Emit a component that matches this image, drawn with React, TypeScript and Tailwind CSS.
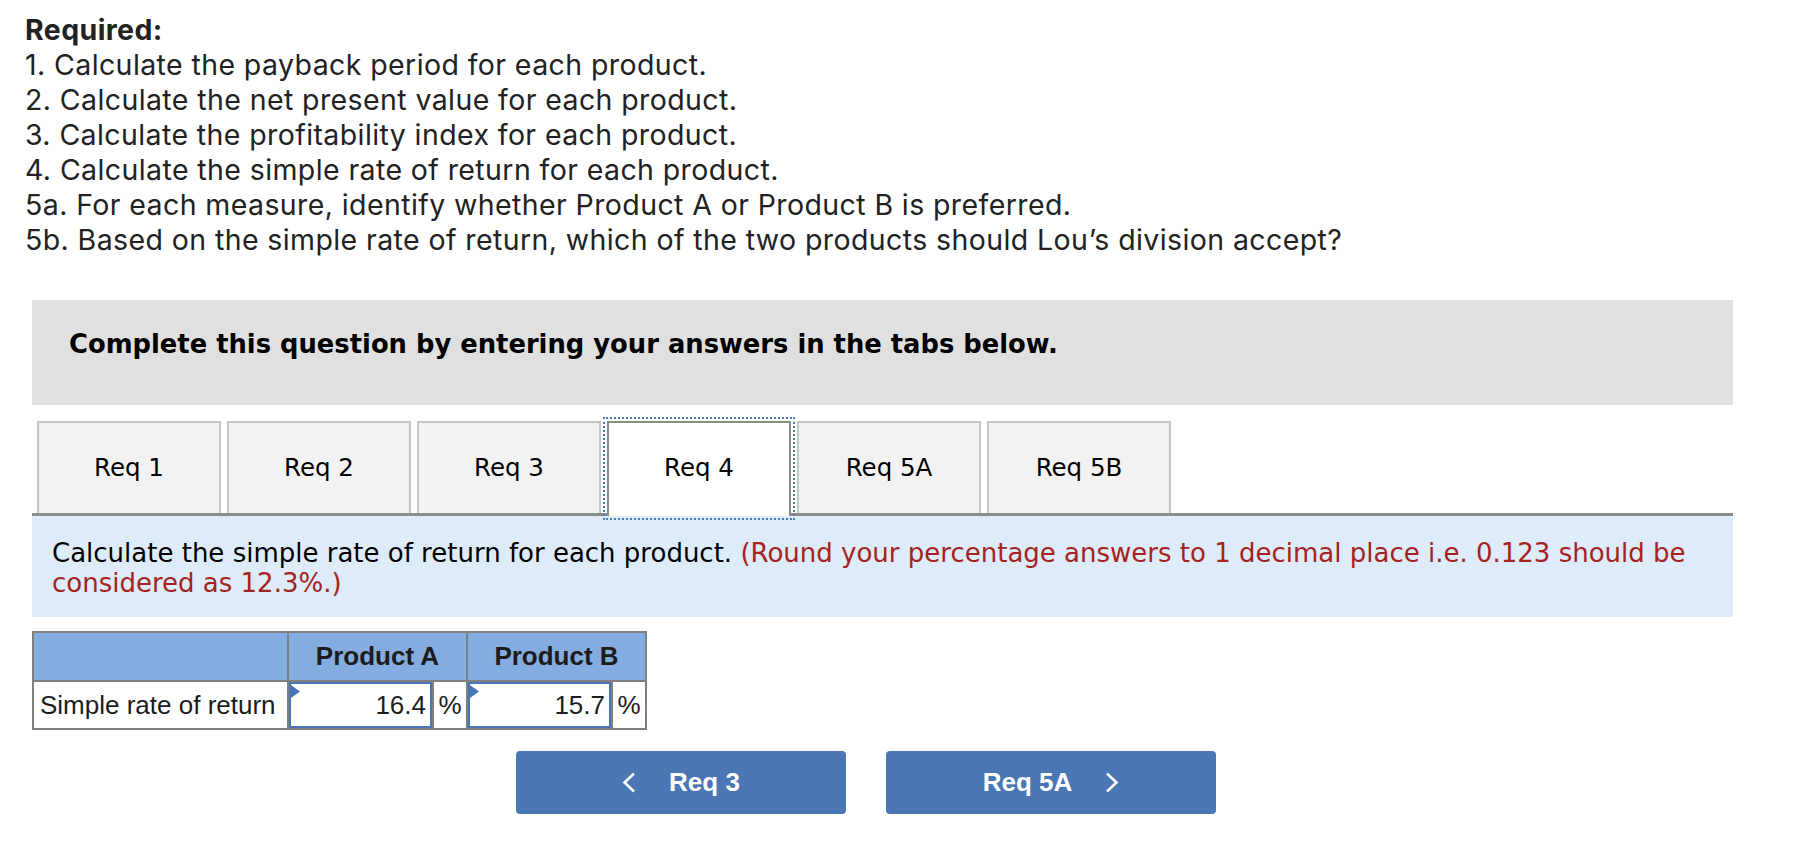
import React from 'react';

const verdana = "font-['DejaVu_Sans',Verdana,sans-serif]";
const arial = "font-['Liberation_Sans',Arial,Helvetica,sans-serif]";

const tabs = ['Req 1', 'Req 2', 'Req 3', 'Req 4', 'Req 5A', 'Req 5B'];
const activeTab = 'Req 4';

function Marker() {
  return (
    <svg className="absolute left-0 top-[1px]" width="10" height="13" viewBox="0 0 10 13">
      <polygon points="0,0 9,6.5 0,13" fill="#4a75b5" />
    </svg>
  );
}

function ChevronLeft() {
  return (
    <svg width="14" height="21" viewBox="0 0 14 21" fill="none">
      <polyline points="12,1.5 2.5,10.5 12,19.5" stroke="white" strokeWidth="2.6" />
    </svg>
  );
}

function ChevronRight() {
  return (
    <svg width="14" height="21" viewBox="0 0 14 21" fill="none">
      <polyline points="2,1.5 11.5,10.5 2,19.5" stroke="white" strokeWidth="2.6" />
    </svg>
  );
}

export default function App() {
  const required = [
    '1. Calculate the payback period for each product.',
    '2. Calculate the net present value for each product.',
    '3. Calculate the profitability index for each product.',
    '4. Calculate the simple rate of return for each product.',
    '5a. For each measure, identify whether Product A or Product B is preferred.',
    '5b. Based on the simple rate of return, which of the two products should Lou\u2019s division accept?',
  ];

  return (
    <div className="min-h-[868px] w-[1808px] bg-white pb-10">
      <div className="pl-[25px] pt-[12px] font-['Inter',sans-serif] text-[28.5px] leading-[35px] tracking-[0.4px] text-[#222]">
        <div className="font-bold">Required:</div>
        {required.map((line) => (
          <div key={line}>{line}</div>
        ))}
      </div>

      <div className="ml-[32px] mt-[43px] w-[1701px]">
        <div className={`h-[105px] bg-[#e0e0e0] pl-[37px] pt-[29px] ${verdana} text-[25.8px] font-bold leading-[30px] text-black`}>
          Complete this question by entering your answers in the tabs below.
        </div>

        <div className="mt-[16px] flex items-end gap-[6px] border-b-[3px] border-[#8c8c8c] pl-[5px]">
          {tabs.map((t) =>
            t === activeTab ? (
              <div
                key={t}
                className={`relative -mb-[3px] flex h-[95px] w-[184px] items-center justify-center border-2 border-b-0 border-[#8c8c8c] bg-white pb-[3px] outline-2 outline-offset-2 outline-dotted outline-[#4a7bc4] ${verdana} text-[24.5px] text-black`}
              >
                {t}
              </div>
            ) : (
              <div
                key={t}
                className={`flex h-[92px] w-[184px] items-center justify-center border-2 border-b-0 border-[#c6c6c6] bg-[#f2f2f2] ${verdana} text-[24.5px] text-black`}
              >
                {t}
              </div>
            )
          )}
        </div>

        <div className={`h-[101px] bg-[#deebf8] pl-[20px] pt-[22px] ${verdana} text-[26px] leading-[30px] text-black`}>
          Calculate the simple rate of return for each product.{' '}
          <span className="text-[#a4231e]">
            (Round your percentage answers to 1 decimal place i.e. 0.123 should be
            <br />
            considered as 12.3%.)
          </span>
        </div>

        <div
          className={`mt-[14px] grid w-[615px] grid-cols-[253px_143px_32px_143px_32px] grid-rows-[47px_46px] gap-[2px] bg-[#7f7f7f] p-[2px] ${arial} text-[26px] text-[#1c1c1c]`}
        >
          <div className="bg-[#84ace0]" />
          <div className="col-span-2 flex items-center justify-center bg-[#84ace0] font-bold">Product A</div>
          <div className="col-span-2 flex items-center justify-center bg-[#84ace0] font-bold">Product B</div>

          <div className="flex items-center bg-white pl-[6px]">Simple rate of return</div>
          <div className="relative flex items-center justify-end border-2 border-[#4a75b5] bg-white pr-[4px]">
            <Marker />
            16.4
          </div>
          <div className="flex items-center justify-center bg-white">%</div>
          <div className="relative flex items-center justify-end border-2 border-[#4a75b5] bg-white pr-[4px]">
            <Marker />
            15.7
          </div>
          <div className="flex items-center justify-center bg-white">%</div>
        </div>

        <div className={`mt-[21px] flex gap-[40px] pl-[484px] ${arial} text-[26px] font-bold text-white`}>
          <button className="flex h-[63px] w-[330px] items-center justify-center gap-[33px] rounded-[4px] bg-[#4a76b4]">
            <ChevronLeft />
            <span>Req 3</span>
          </button>
          <button className="flex h-[63px] w-[330px] items-center justify-center gap-[33px] rounded-[4px] bg-[#4a76b4]">
            <span>Req 5A</span>
            <ChevronRight />
          </button>
        </div>
      </div>
    </div>
  );
}
